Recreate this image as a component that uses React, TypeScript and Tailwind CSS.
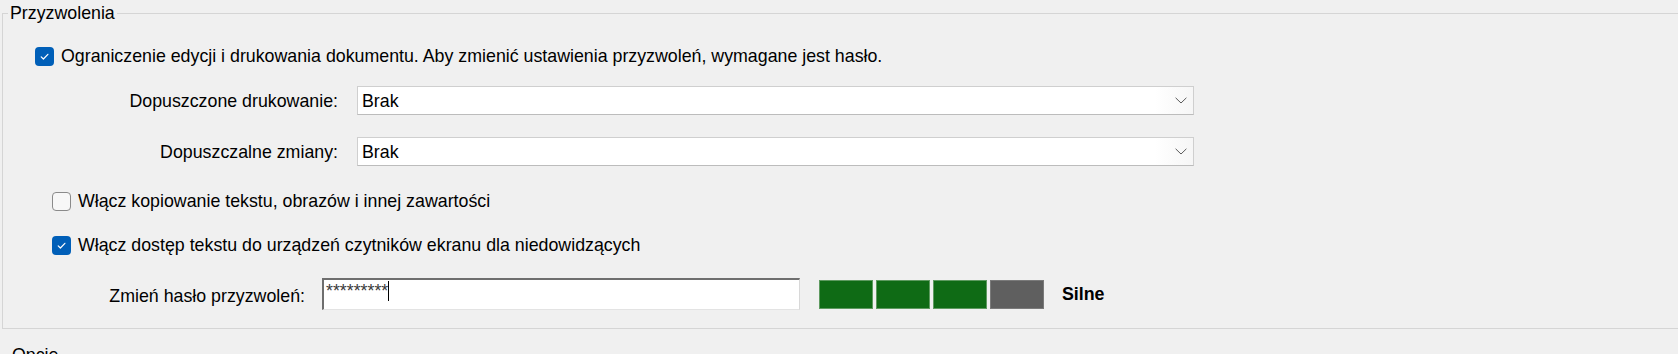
import React from "react";

function Check({ checked }: { checked: boolean }) {
  if (checked) {
    return (
      <div className="w-[19px] h-[19px] rounded-[4px] bg-[#005fb8] flex items-center justify-center shrink-0">
        <svg width="19" height="19" viewBox="0 0 19 19">
          <path d="M6.2 9.8 L8.4 12 L12.9 7.3" fill="none" stroke="#ffffff" strokeWidth="1.2" strokeLinecap="round" strokeLinejoin="round" />
        </svg>
      </div>
    );
  }
  return <div className="w-[19px] h-[19px] rounded-[4px] border border-[#8a8a8a] bg-[#f7f7f7] shrink-0" />;
}

function Select({ value }: { value: string }) {
  return (
    <div className="ml-[19px] w-[837px] h-[29px] bg-white border border-[#cfcfcf] border-b-[#bcbcbc] flex items-center">
      <div className="flex-1 pl-[4px]">{value}</div>
      <div className="w-[38px] h-full bg-linear-to-r from-white to-[#f6f6f6] flex items-center justify-end pr-[6px]">
        <svg width="12" height="7" viewBox="0 0 12 7">
          <path d="M0.6 0.8 L6 6 L11.4 0.8" fill="none" stroke="#5a5a5a" strokeWidth="1" />
        </svg>
      </div>
    </div>
  );
}

export default function App() {
  return (
    <div className="w-[1678px] h-[354px] overflow-hidden bg-[#f0f0f0] text-black font-['Liberation_Sans',Arial,sans-serif] text-[17.8px] leading-[20px]">
      <fieldset className="mt-[3px] ml-[2px] w-[1700px] border border-[#d5d5d5] pb-[18px]">
        <legend className="ml-[5px] px-[2px] leading-[20px]">Przyzwolenia</legend>

        <div className="mt-[18px] h-[30px] flex items-center pl-[32px]">
          <Check checked />
          <span className="ml-[7px]">
            Ograniczenie edycji i drukowania dokumentu. Aby zmienić ustawienia przyzwoleń, wymagane jest hasło.
          </span>
        </div>

        <div className="mt-[15px] h-[29px] flex items-center">
          <div className="w-[335px] text-right">Dopuszczone drukowanie:</div>
          <Select value="Brak" />
        </div>

        <div className="mt-[22px] h-[29px] flex items-center">
          <div className="w-[335px] text-right">Dopuszczalne zmiany:</div>
          <Select value="Brak" />
        </div>

        <div className="mt-[20px] h-[30px] flex items-center pl-[49px]">
          <Check checked={false} />
          <span className="ml-[7px]">Włącz kopiowanie tekstu, obrazów i innej zawartości</span>
        </div>

        <div className="mt-[14px] h-[30px] flex items-center pl-[49px]">
          <Check checked />
          <span className="ml-[7px]">Włącz dostęp tekstu do urządzeń czytników ekranu dla niedowidzących</span>
        </div>

        <div className="mt-[18px] h-[32px] flex items-center">
          <div className="w-[302px] text-right pt-[4px]">Zmień hasło przyzwoleń:</div>
          <div className="ml-[17px] w-[478px] h-[32px] bg-white border-t-2 border-l-2 border-t-[#6e6e6e] border-l-[#6e6e6e] border-r border-b border-r-[#d8d8d8] border-b-[#e3e3e3] pl-[2px] flex items-start">
            <span className="text-[#3a3a3a] leading-[20px] mt-[1px]">*********</span>
            <span className="inline-block w-[1px] h-[20px] bg-black mt-[1px]" />
          </div>
          <div className="ml-[19px] flex gap-[3px]">
            <div className="w-[54px] h-[29px] bg-[#0f6b15] border border-[#5e9a60]" />
            <div className="w-[54px] h-[29px] bg-[#0f6b15] border border-[#5e9a60]" />
            <div className="w-[54px] h-[29px] bg-[#0f6b15] border border-[#5e9a60]" />
            <div className="w-[54px] h-[29px] bg-[#5f5f5f] border border-[#7a7a7a]" />
          </div>
          <div className="ml-[18px] font-bold">Silne</div>
        </div>
      </fieldset>

      <fieldset className="mt-[16px] ml-[2px] w-[1700px] border border-[#d5d5d5] pb-[40px]">
        <legend className="ml-[7px] px-[2px] leading-[20px]">Opcje</legend>
        <div className="h-[40px]" />
      </fieldset>
    </div>
  );
}
